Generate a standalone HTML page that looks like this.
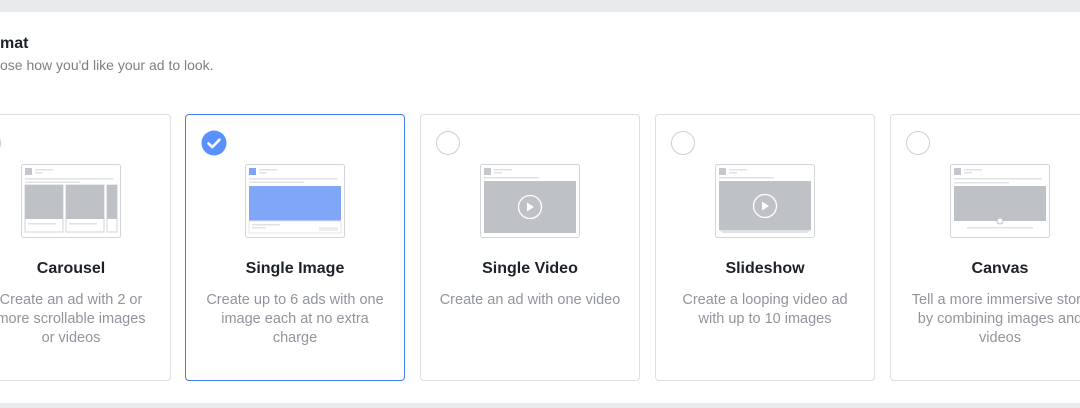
<!DOCTYPE html>
<html><head><style>
body{margin:0;width:1080px;height:408px;background:#fff;position:relative;overflow:hidden;font-family:"Liberation Sans",Arial,sans-serif}
.band{position:absolute;left:0;width:1080px;background:#e9eaed}
.h{position:absolute;left:0;top:35px;font-size:16px;font-weight:bold;color:#1d2129}
.s{position:absolute;left:0;top:57px;font-size:14px;color:#7f7f7f}
.card{position:absolute;top:114px;width:218px;height:265px;border:1px solid #dddfe2;border-radius:4px;background:#fff}
.card.sel{border-color:#4080ff}
.radio{position:absolute;left:15px;top:16px;width:22px;height:22px;border:1px solid #ccd0d5;border-radius:50%}
.ill{position:absolute;left:59px;top:49px}
.t{position:absolute;left:0;width:218px;top:145px;text-align:center;font-size:16px;font-weight:bold;color:#1d2129}
.d{position:absolute;left:17px;width:184px;top:176px;text-align:center;font-size:14.5px;line-height:19px;color:#90949c}
.c1 .ill{left:69px}.c1 .t{left:10px}.c1 .d{left:43px;width:152px}
</style></head><body>
<div class="band" style="top:0;height:12px"></div>
<div class="band" style="top:403px;height:5px"></div>
<div class="h">mat</div>
<div class="s">ose how you'd like your ad to look.</div>

<div class="card c1" style="left:-49px">
<div class="radio" style="left:25px"></div>
<svg class="ill" width="100" height="74" viewBox="0 0 100 74"><rect x=".5" y=".5" width="99" height="73" rx="2" fill="#fff" stroke="#d3d5d9"/><rect x="4" y="4" width="7" height="7" fill="#c4c7cc"/><rect x="14" y="5" width="18" height="1.5" fill="#dfe1e4"/><rect x="14" y="8" width="8" height="1.5" fill="#dfe1e4"/><rect x="4" y="14" width="88" height="1.5" fill="#dfe1e4"/><rect x="4" y="17.5" width="55" height="1.5" fill="#dfe1e4"/><rect x="4" y="21" width="38" height="47" fill="#fff" stroke="#d3d5d9"/><rect x="4" y="21" width="38" height="34" fill="#bec1c6"/><rect x="45" y="21" width="38" height="47" fill="#fff" stroke="#d3d5d9"/><rect x="45" y="21" width="38" height="34" fill="#bec1c6"/><rect x="86" y="21" width="10" height="47" fill="#fff" stroke="#d3d5d9"/><rect x="86" y="21" width="10" height="34" fill="#bec1c6"/><rect x="7" y="59" width="28" height="1.5" fill="#dfe1e4"/><rect x="48" y="59" width="28" height="1.5" fill="#dfe1e4"/></svg>
<div class="t">Carousel</div>
<div class="d">Create an ad with 2 or more scrollable images or videos</div>
</div>

<div class="card sel" style="left:185px">
<svg style="position:absolute;left:15px;top:15px" width="26" height="26" viewBox="0 0 26 26"><circle cx="13" cy="13" r="12.5" fill="#5890ff"/><path d="M7.5 13.5l3.8 3.6 7.2-7.4" fill="none" stroke="#fff" stroke-width="2.6" stroke-linecap="round" stroke-linejoin="round"/></svg>
<svg class="ill" width="100" height="74" viewBox="0 0 100 74"><rect x=".5" y=".5" width="99" height="73" rx="2" fill="#fff" stroke="#d3d5d9"/><rect x="4" y="4" width="7" height="7" fill="#7ea6f5"/><rect x="14" y="5" width="18" height="1.5" fill="#dfe1e4"/><rect x="14" y="8" width="8" height="1.5" fill="#dfe1e4"/><rect x="4" y="14" width="88" height="1.5" fill="#dfe1e4"/><rect x="4" y="17.5" width="55" height="1.5" fill="#dfe1e4"/><rect x="4" y="22" width="92" height="35" fill="#80a7f7"/><rect x="4" y="57" width="92" height="12" fill="#fff" stroke="#e3e5e8"/><rect x="7" y="60" width="28" height="1.5" fill="#dfe1e4"/><rect x="7" y="63" width="14" height="1.5" fill="#dfe1e4"/><rect x="74" y="63" width="19" height="4" fill="#eceef0"/></svg>
<div class="t">Single Image</div>
<div class="d">Create up to 6 ads with one image each at no extra charge</div>
</div>

<div class="card" style="left:420px">
<div class="radio"></div>
<svg class="ill" width="100" height="74" viewBox="0 0 100 74"><rect x=".5" y=".5" width="99" height="73" rx="2" fill="#fff" stroke="#d3d5d9"/><rect x="4" y="4" width="7" height="7" fill="#c4c7cc"/><rect x="14" y="5" width="18" height="1.5" fill="#dfe1e4"/><rect x="14" y="8" width="8" height="1.5" fill="#dfe1e4"/><rect x="4" y="13" width="55" height="1.5" fill="#dfe1e4"/><rect x="4" y="17" width="92" height="52" fill="#bec1c6"/><circle cx="50" cy="43" r="11.5" fill="none" stroke="#fff" stroke-width="1.3"/><path d="M47 38.5v9l7-4.5z" fill="#fff"/></svg>
<div class="t">Single Video</div>
<div class="d">Create an ad with one video</div>
</div>

<div class="card" style="left:655px">
<div class="radio"></div>
<svg class="ill" width="100" height="74" viewBox="0 0 100 74"><rect x=".5" y=".5" width="99" height="73" rx="2" fill="#fff" stroke="#d3d5d9"/><rect x="4" y="4" width="7" height="7" fill="#c4c7cc"/><rect x="14" y="5" width="18" height="1.5" fill="#dfe1e4"/><rect x="14" y="8" width="8" height="1.5" fill="#dfe1e4"/><rect x="4" y="13" width="55" height="1.5" fill="#dfe1e4"/><rect x="4" y="17" width="92" height="49" fill="#bec1c6"/><path d="M4 66h92l-4 3H8z" fill="#dfe1e4"/><circle cx="50" cy="42" r="11.5" fill="none" stroke="#fff" stroke-width="1.3"/><path d="M47 37.5v9l7-4.5z" fill="#fff"/></svg>
<div class="t">Slideshow</div>
<div class="d">Create a looping video ad with up to 10 images</div>
</div>

<div class="card" style="left:890px">
<div class="radio"></div>
<svg class="ill" width="100" height="74" viewBox="0 0 100 74"><rect x=".5" y=".5" width="99" height="73" rx="2" fill="#fff" stroke="#d3d5d9"/><rect x="4" y="4" width="7" height="7" fill="#c4c7cc"/><rect x="14" y="5" width="18" height="1.5" fill="#dfe1e4"/><rect x="14" y="8" width="8" height="1.5" fill="#dfe1e4"/><rect x="4" y="14" width="88" height="1.5" fill="#dfe1e4"/><rect x="4" y="18" width="55" height="1.5" fill="#dfe1e4"/><rect x="4" y="22" width="92" height="35" fill="#bec1c6"/><circle cx="50" cy="57" r="3" fill="#fff" stroke="#bec1c6"/><rect x="17" y="63" width="66" height="1.5" fill="#dfe1e4"/></svg>
<div class="t">Canvas</div>
<div class="d">Tell a more immersive story by combining images and videos</div>
</div>
</body></html>
